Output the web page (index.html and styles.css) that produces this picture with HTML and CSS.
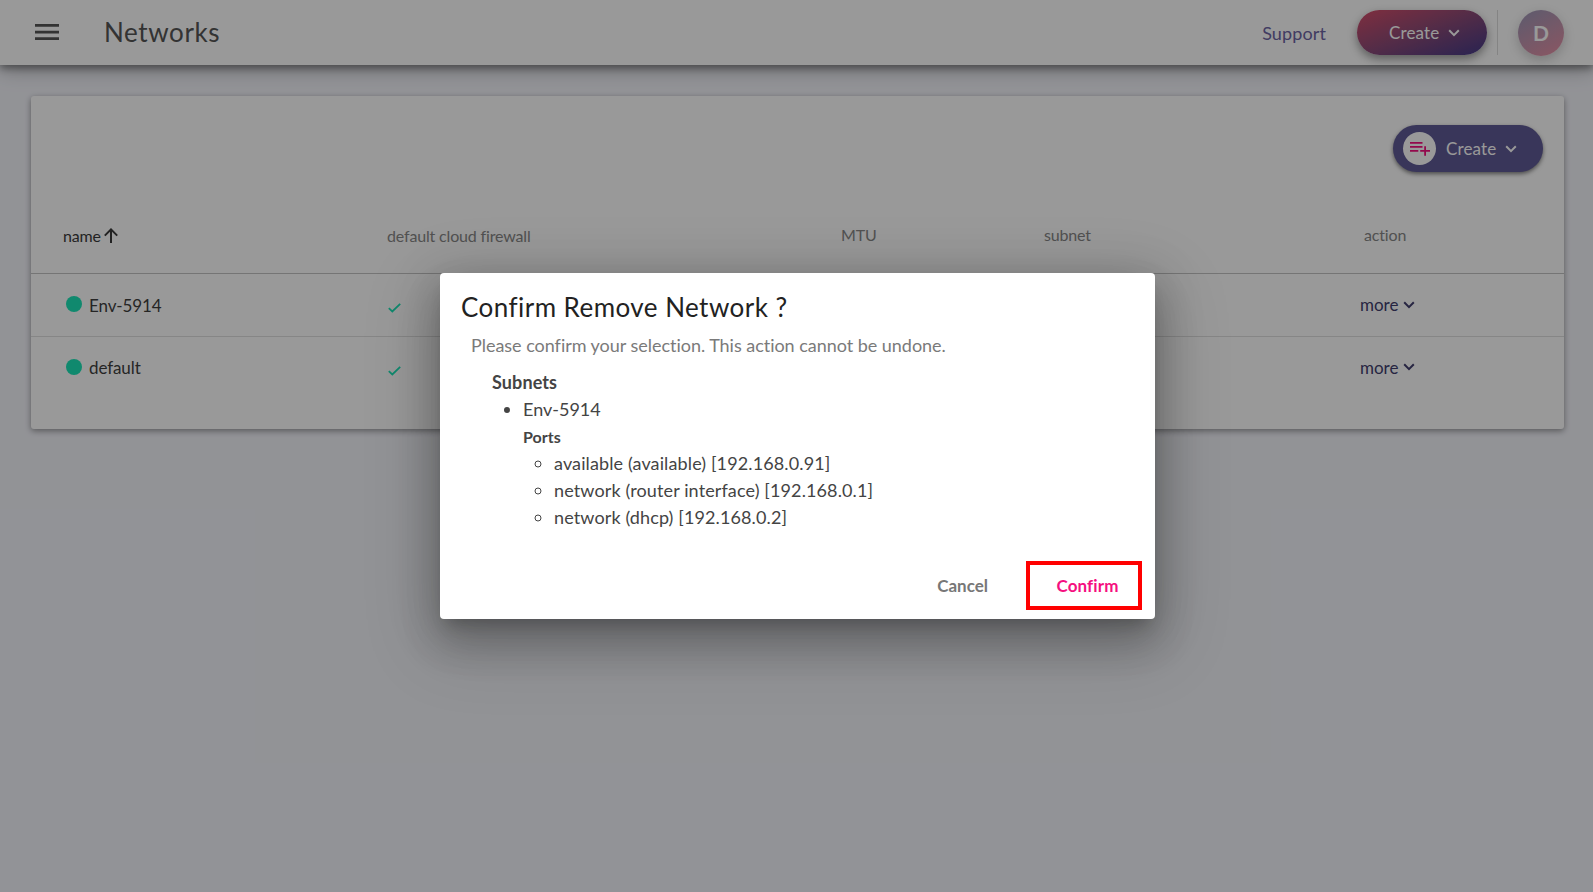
FILE: index.html
```html
<!DOCTYPE html>
<html lang="en">
<head>
<meta charset="utf-8">
<title>Networks</title>
<link rel="stylesheet" href="styles.css">
</head>
<body>
<div class="page">
  <header class="topbar">
    <svg class="menu" viewBox="0 0 24 16"><path d="M0 0h24v2.7H0zM0 6.7h24v2.7H0zM0 13.3h24V16H0z"/></svg>
    <h1 class="title">Networks</h1>
    <a class="support">Support</a>
    <button class="create-main"><span>Create</span><svg class="chev" viewBox="0 0 12 8"><path d="M1.2 1.3 6 6.1l4.8-4.8"/></svg></button>
    <span class="divider"></span>
    <span class="avatar">D</span>
  </header>
  <main class="card">
    <div class="toolbar">
      <button class="create-net">
        <span class="badge"><svg viewBox="0 0 20 14"><path d="M0 0h12.5v1.8H0zM0 4h12.5v1.8H0zM0 8h8.3v1.8H0zM14.2 4.3H16V8h4v1.8h-4v4h-1.800v-4h-4V8h4z"/></svg></span>
        <span>Create</span><svg class="chev" viewBox="0 0 12 8"><path d="M1.2 1.3 6 6.1l4.8-4.8"/></svg>
      </button>
    </div>
    <div class="row head">
      <span class="sorted"><span>name</span><svg class="arrow" viewBox="0 0 14 15"><path d="M7 15V1.5M.8 7.6 7 1.4l6.200 6.200"/></svg></span>
      <span class="firewall">default cloud firewall</span>
      <span class="up">MTU</span>
      <span class="up">subnet</span>
      <span class="up act">action</span>
    </div>
    <div class="row">
      <span class="net"><i class="dot"></i><span>Env-5914</span></span>
      <span><svg class="check" viewBox="0 0 13 10"><path d="M.8 5.2 4.3 8.500 12.200.800"/></svg></span>
      <span></span><span></span>
      <span class="more"><span>more</span><svg class="chev" viewBox="0 0 12 8"><path d="M1.2 1.3 6 6.1l4.8-4.8"/></svg></span>
    </div>
    <div class="row last">
      <span class="net"><i class="dot"></i><span>default</span></span>
      <span><svg class="check" viewBox="0 0 13 10"><path d="M.8 5.2 4.3 8.500 12.200.800"/></svg></span>
      <span></span><span></span>
      <span class="more"><span>more</span><svg class="chev" viewBox="0 0 12 8"><path d="M1.2 1.3 6 6.1l4.8-4.8"/></svg></span>
    </div>
  </main>
</div>
<div class="overlay">
  <section class="dialog">
    <h2 class="dialog-title">Confirm Remove Network ?</h2>
    <p class="lead">Please confirm your selection. This action cannot be undone.</p>
    <div class="details">
      <h3>Subnets</h3>
      <ul>
        <li>Env-5914
          <h4>Ports</h4>
          <ul class="ports">
            <li>available (available) [192.168.0.91]</li>
            <li>network (router interface) [192.168.0.1]</li>
            <li>network (dhcp) [192.168.0.2]</li>
          </ul>
        </li>
      </ul>
    </div>
    <div class="actions">
      <button class="cancel">Cancel</button>
      <button class="confirm">Confirm</button>
    </div>
  </section>
</div>
</body>
</html>
```

FILE: styles.css
```css
* { box-sizing: border-box; }
body {
  margin: 0;
  height: 892px;
  overflow: hidden;
  font-family: Lato, "Liberation Sans", sans-serif;
  color: #3f3f3f;
  background: #f4f5fb;
}
h1, h2, h3, h4, p, ul { margin: 0; }
button { border: 0; padding: 0; background: none; font: inherit; }
svg { display: block; flex: none; }
.chev { width: 12px; height: 8px; fill: none; stroke: currentColor; stroke-width: 2; }

.topbar {
  display: flex;
  align-items: center;
  height: 65px;
  padding: 0 29px 0 35px;
  background: #fff;
  box-shadow: 0 4px 20px rgba(0, 0, 0, .28), 0 3px 8px rgba(0, 0, 0, .4);
}
.menu { width: 24px; height: 16px; margin-bottom: 1px; fill: #555; }
.title { margin: 0 0 2px 45px; font-size: 26px; font-weight: 400; letter-spacing: .6px; line-height: 32px; color: #555; }
.support { margin-left: auto; font-size: 18px; letter-spacing: .12px; color: #6d64a4; }
.create-main {
  display: flex;
  align-items: center;
  width: 130px;
  height: 45px;
  margin-left: 31px;
  padding-left: 32px;
  border-radius: 23px;
  font-size: 17px;
  letter-spacing: .15px;
  color: #fff;
  background: linear-gradient(160deg, #d44e6a 0%, #8a4a78 50%, #4b3c86 95%);
  box-shadow: 0 4px 10px rgba(0, 0, 0, .4);
}
.create-main .chev { margin-left: 9px; }
.divider { width: 1px; height: 45px; margin-left: 10px; background: #ddd; }
.avatar {
  display: flex;
  align-items: center;
  justify-content: center;
  width: 46px;
  height: 46px;
  margin-left: 20px;
  border-radius: 50%;
  font-size: 21px;
  font-weight: 700;
  color: #fff;
  background: linear-gradient(150deg, #9a98b8, #e890a4);
  box-shadow: 0 4px 12px rgba(0, 0, 0, .2);
}

.card {
  width: 1533px;
  height: 333px;
  margin: 31px 0 0 31px;
  border-radius: 3px;
  background: #fff;
  box-shadow: 0 2px 6px rgba(0, 0, 0, .4);
}
.toolbar { display: flex; justify-content: flex-end; height: 104px; padding: 29px 21px 0 0; }
.create-net {
  display: flex;
  align-items: center;
  width: 150px;
  height: 47px;
  padding-left: 10px;
  border-radius: 24px;
  font-size: 17px;
  letter-spacing: .15px;
  color: #fff;
  background: #5f5a96;
  box-shadow: 0 2px 4px rgba(0, 0, 0, .5);
}
.create-net .chev { margin-left: 9px; }
.badge { display: flex; align-items: center; justify-content: center; width: 33px; height: 33px; margin-right: 10px; border-radius: 50%; background: #fff; }
.badge svg { width: 20px; height: 14px; fill: #f50f7f; }

.row {
  display: grid;
  grid-template-columns: 324px 454px 203px 316px 1fr;
  align-items: center;
  height: 63px;
  padding-left: 32px;
  font-size: 17px;
  border-bottom: 1px solid #e0e0e0;
}
.head { height: 74px; font-size: 16px; letter-spacing: -.16px; color: #888; border-bottom-color: #c4c4c4; }
.last { height: 61px; border: 0; }
.sorted { display: flex; align-items: center; padding-bottom: 2px; color: #3a3a3a; }
.arrow { width: 14px; height: 15px; margin-left: 3px; fill: none; stroke: currentColor; stroke-width: 2; }
.firewall { padding-bottom: 2px; }
.up { padding-bottom: 4px; }
.net { display: flex; align-items: center; padding-left: 3px; letter-spacing: -.1px; }
.dot { width: 16px; height: 16px; margin: 0 7px 2px 0; border-radius: 50%; background: #1ce5b7; }
.check { width: 13px; height: 10px; margin: 6px 0 0 1px; fill: none; stroke: #1ce5b7; stroke-width: 1.8; }
.more { display: flex; align-items: center; padding-bottom: 1px; color: #413e6e; }
.more .chev { margin-left: 5px; }
.act { padding-left: 4px; }

.overlay {
  position: absolute;
  inset: 0;
  padding: 273px 0 0 440px;
  background: rgba(0, 0, 0, .4);
}
.dialog {
  width: 715px;
  height: 346px;
  padding: 18px 13px 9px 21px;
  border-radius: 4px;
  background: #fff;
  box-shadow: 0 11px 15px -7px rgba(0, 0, 0, .2), 0 24px 38px 3px rgba(0, 0, 0, .14), 0 9px 46px 8px rgba(0, 0, 0, .12), 0 20px 70px 10px rgba(0, 0, 0, .15);
}
.dialog-title { font-size: 26px; font-weight: 400; letter-spacing: .45px; line-height: 32px; color: #222; }
.lead { padding: 9px 0 0 10px; font-size: 18px; line-height: 27px; letter-spacing: -.03px; color: #7a7a7a; }
.details { padding: 10px 0 0 31px; font-size: 18px; line-height: 27px; color: #444; }
.details h3 { font-size: 18px; letter-spacing: .1px; }
.details h4 { font-size: 16px; line-height: 27px; }
.details ul { padding-left: 31px; }
.details .ports { letter-spacing: .12px; }
.actions { display: flex; justify-content: flex-end; margin-top: 30px; font-size: 17px; font-weight: 700; }
.cancel { margin-right: 38px; padding-bottom: 1px; color: #777; }
.confirm { width: 116px; height: 49px; padding: 0 0 1px 7px; border: 4px solid #f00; letter-spacing: .1px; color: #f50f7f; }
```
